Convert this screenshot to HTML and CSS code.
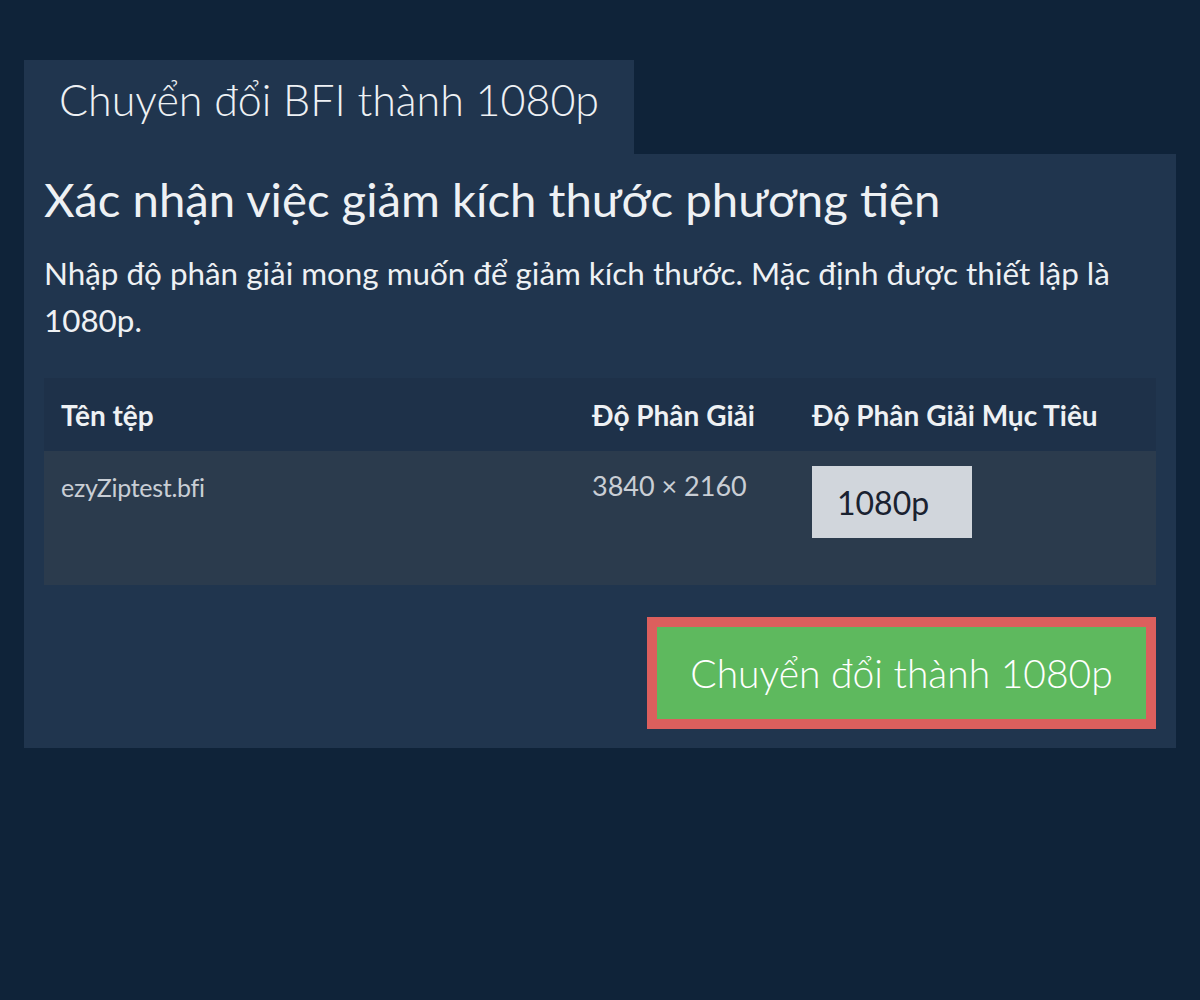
FILE: index.html
```html
<!DOCTYPE html>
<html lang="vi">
<head>
<meta charset="utf-8">
<link rel="stylesheet" href="styles.css">
</head>
<body>
<div class="wrap">
  <div class="tab">Chuyển đổi BFI thành 1080p</div>
  <div class="panel">
    <h1 class="title">Xác nhận việc giảm kích thước phương tiện</h1>
    <p class="desc">Nhập độ phân giải mong muốn để giảm kích thước. Mặc định được thiết lập là 1080p.</p>
    <table class="files">
      <thead>
        <tr>
          <th class="c1">Tên tệp</th>
          <th class="c2">Độ Phân Giải</th>
          <th class="c3">Độ Phân Giải Mục Tiêu</th>
        </tr>
      </thead>
      <tbody>
        <tr>
          <td class="name">ezyZiptest.bfi</td>
          <td class="size">3840 × 2160</td>
          <td class="target"><input class="res" type="text" value="1080p"></td>
        </tr>
      </tbody>
    </table>
    <div class="actions">
      <button class="convert">Chuyển đổi thành 1080p</button>
    </div>
  </div>
</div>
</body>
</html>
```
FILE: styles.css
```css
html, body {
  margin: 0;
  padding: 0;
  background: #0f2339;
  font-family: Lato, "Noto Sans", sans-serif;
}
.wrap {
  padding: 60px 24px 0 24px;
}
.tab {
  width: 610px;
  height: 94px;
  box-sizing: border-box;
  background: #20354e;
  color: #eef1f4;
  font-weight: 300;
  font-size: 43px;
  padding: 16px 0 0 35px;
  line-height: 48px;
  white-space: nowrap;
}
.panel {
  background: #20354e;
  padding: 17px 20px 19px 20px;
}
.title {
  margin: 0;
  font-size: 47.3px;
  font-weight: 400;
  color: #eef1f4;
  line-height: 56px;
  white-space: nowrap;
}
.desc {
  margin: 23px 0 0 0;
  font-size: 31.4px;
  line-height: 47px;
  color: #eef1f4;
}
.files {
  margin-top: 34px;
  width: 100%;
  border-collapse: collapse;
  table-layout: fixed;
}
.files th {
  background: #1e3149;
  color: #eef1f4;
  font-size: 28px;
  font-weight: 700;
  text-align: left;
  height: 73px;
  padding: 0 0 0 17px;
  box-sizing: border-box;
  white-space: nowrap;
}
.files .c1 { width: 531px; }
.files .c2 { width: 220px; }
.files td {
  background: #2b3b4d;
  color: #c9ced5;
  font-weight: 400;
  vertical-align: top;
  padding: 0 0 0 17px;
  height: 134px;
  box-sizing: border-box;
  line-height: 1.2;
}
.files .name {
  font-size: 25px;
  letter-spacing: -0.3px;
  padding-top: 21px;
}
.files .size {
  font-size: 27px;
  padding-top: 19px;
  white-space: nowrap;
}
.files .target {
  padding-top: 15px;
}
.res {
  display: block;
  width: 160px;
  height: 72px;
  box-sizing: border-box;
  border: none;
  background: #d1d6dc;
  color: #1a2230;
  font-family: Lato, sans-serif;
  font-size: 32px;
  padding: 0 0 0 25px;
  outline: none;
}
.actions {
  display: flex;
  justify-content: flex-end;
  margin-top: 32px;
}
.convert {
  width: 509px;
  height: 112px;
  box-sizing: border-box;
  border: 10px solid #dc5f5d;
  background: #5eb95e;
  color: #ffffff;
  font-family: Lato, sans-serif;
  font-weight: 300;
  font-size: 39px;
  cursor: pointer;
  padding: 0;
  white-space: nowrap;
}
```
